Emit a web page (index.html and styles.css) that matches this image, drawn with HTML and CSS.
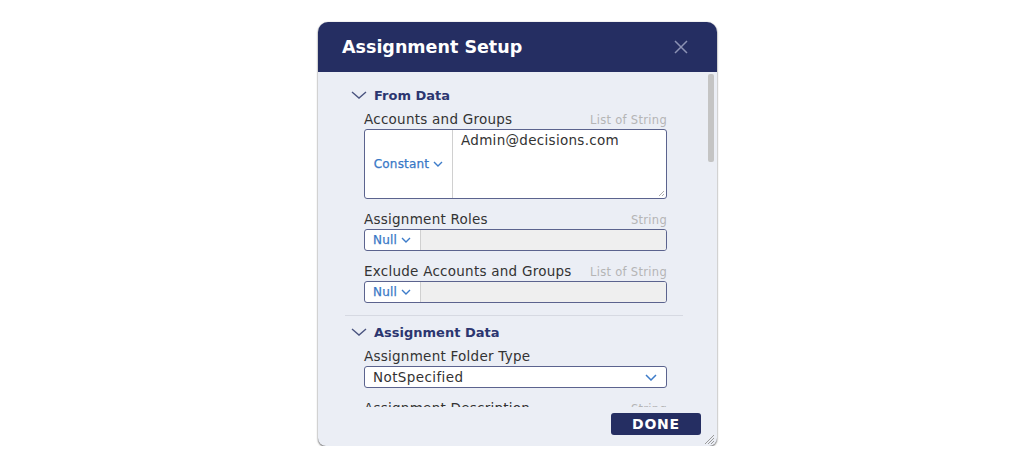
FILE: index.html
```
<!DOCTYPE html>
<html lang="en">
<head>
    <meta charset="UTF-8">
    <meta name="viewport" content="width=device-width, initial-scale=1.0">
    <title>Assignment Setup</title>
    <link rel="stylesheet" href="styles.css">
</head>
<body>

    <div class="page">
        <div class="dialog">
            <div class="dialog-header">
                <h1>Assignment Setup</h1>
                <svg class="close" width="14" height="14" viewBox="0 0 14 14">
                    <path d="M1 1 L13 13 M13 1 L1 13" stroke="#8c92b4" stroke-width="1.5" fill="none"/>
                </svg>
            </div>

            <div class="dialog-body">
                <div class="body-content">
                    <div class="section">
                        <div class="section-title">
                            <svg width="16" height="8" viewBox="0 0 16 8"><polyline points="1,1 8,7 15,1" fill="none" stroke="#4b5580" stroke-width="1.4"/></svg>
                            From Data
                        </div>

                        <div class="field">
                            <div class="field-label"><span>Accounts and Groups</span><span class="type">List of String</span></div>
                            <div class="input-box tall">
                                <div class="mode">Constant <svg width="10" height="6" viewBox="0 0 10 6"><polyline points="1,1 5,5 9,1" fill="none" stroke="#3d7cc9" stroke-width="1.4"/></svg></div>
                                <div class="value text">Admin@decisions.com
                                    <svg class="grip small" width="8" height="8" viewBox="0 0 8 8"><path d="M7 2 L2 7 M7 5 L5 7" stroke="#999" stroke-width="0.8"/></svg>
                                </div>
                            </div>
                        </div>

                        <div class="field">
                            <div class="field-label"><span>Assignment Roles</span><span class="type">String</span></div>
                            <div class="input-box">
                                <div class="mode short">Null <svg width="10" height="6" viewBox="0 0 10 6"><polyline points="1,1 5,5 9,1" fill="none" stroke="#3d7cc9" stroke-width="1.4"/></svg></div>
                                <div class="value empty"></div>
                            </div>
                        </div>

                        <div class="field">
                            <div class="field-label"><span>Exclude Accounts and Groups</span><span class="type">List of String</span></div>
                            <div class="input-box">
                                <div class="mode short">Null <svg width="10" height="6" viewBox="0 0 10 6"><polyline points="1,1 5,5 9,1" fill="none" stroke="#3d7cc9" stroke-width="1.4"/></svg></div>
                                <div class="value empty"></div>
                            </div>
                        </div>
                    </div>

                    <div class="section">
                        <div class="section-title">
                            <svg width="16" height="8" viewBox="0 0 16 8"><polyline points="1,1 8,7 15,1" fill="none" stroke="#4b5580" stroke-width="1.4"/></svg>
                            Assignment Data
                        </div>

                        <div class="field">
                            <div class="field-label"><span>Assignment Folder Type</span></div>
                            <div class="select-box">
                                <span>NotSpecified</span>
                                <svg width="12" height="7" viewBox="0 0 12 7"><polyline points="1,1 6,6 11,1" fill="none" stroke="#3d7cc9" stroke-width="1.5"/></svg>
                            </div>
                        </div>

                        <div class="field">
                            <div class="field-label"><span>Assignment Description</span><span class="type">String</span></div>
                            <div class="input-box">
                                <div class="mode short">Null <svg width="10" height="6" viewBox="0 0 10 6"><polyline points="1,1 5,5 9,1" fill="none" stroke="#3d7cc9" stroke-width="1.4"/></svg></div>
                                <div class="value empty"></div>
                            </div>
                        </div>
                    </div>
                </div>

                <div class="scrollbar"><div class="thumb"></div></div>
            </div>

            <div class="dialog-footer">
                <button class="done">DONE</button>
                <svg class="grip" width="12" height="12" viewBox="0 0 12 12"><path d="M11 2 L2 11 M11 5 L5 11 M11 8 L8 11" stroke="#9a9a9a" stroke-width="1"/></svg>
            </div>
        </div>
    </div>

</body>
</html>
```

FILE: styles.css
```
body {
    margin: 0;
    background: #ffffff;
    font-family: "DejaVu Sans", Verdana, sans-serif;
    color: #333;
}
.page {
    padding: 22px 0 0 318px;
}
.dialog {
    width: 399px;
    height: 424px;
    background: #ebeef5;
    border-radius: 10px 10px 8px 8px;
    box-shadow: 0 1px 2px rgba(0, 0, 0, 0.6), 0 0 1px rgba(0, 0, 0, 0.25);
    display: flex;
    flex-direction: column;
    overflow: hidden;
}
.dialog-header {
    height: 50px;
    flex: none;
    background: #252e62;
    display: flex;
    align-items: center;
    justify-content: space-between;
    padding: 0 29px 0 24px;
}
.dialog-header h1 {
    margin: 0;
    color: #fff;
    font-size: 17.5px;
    font-weight: bold;
}
.dialog-body {
    height: 335px;
    flex: none;
    display: flex;
    overflow: hidden;
}
.body-content {
    flex: 1;
    overflow: hidden;
    padding-top: 7px;
}
.scrollbar {
    width: 10px;
    flex: none;
    padding: 2px 0 0 1px;
    box-sizing: border-box;
}
.thumb {
    width: 6px;
    height: 88px;
    background: #c4c4c4;
    border-radius: 2px;
}
.section {
    margin: 0 24px 0 27px;
    padding: 6px 16px 12px 6px;
    border-bottom: 1px solid #d6d9e2;
}
.section-title {
    display: flex;
    align-items: center;
    gap: 7px;
    height: 20px;
    font-size: 13px;
    font-weight: bold;
    color: #2c3670;
}
.field {
    margin: 6px 0 0 13px;
}
.field + .field {
    margin-top: 12px;
}
.field-label {
    display: flex;
    justify-content: space-between;
    align-items: baseline;
    height: 16px;
    font-size: 13.5px;
    letter-spacing: 0.25px;
    color: #333;
    margin-bottom: 2px;
}
.type {
    font-size: 11.5px;
    letter-spacing: 0.3px;
    color: #b5b5b5;
}
.input-box {
    display: flex;
    height: 22px;
    border: 1px solid #5b638e;
    border-radius: 3px;
    background: #fff;
    box-sizing: border-box;
    overflow: hidden;
}
.input-box.tall {
    height: 70px;
}
.mode {
    width: 88px;
    flex: none;
    display: flex;
    align-items: center;
    justify-content: center;
    gap: 4px;
    font-size: 12px;
    letter-spacing: 0.2px;
    color: #3878c6;
    -webkit-text-stroke: 0.25px #3878c6;
    border-right: 1px solid #d0d0d0;
    box-sizing: border-box;
}
.mode.short {
    width: 56px;
    justify-content: flex-start;
    padding-left: 8px;
}
.value {
    flex: 1;
    position: relative;
}
.value.text {
    padding: 2px 8px;
    font-size: 13.5px;
    letter-spacing: 0.3px;
}
.value.empty {
    background: #efefef;
}
.grip.small {
    position: absolute;
    right: 1px;
    bottom: 1px;
}
.select-box {
    display: flex;
    justify-content: space-between;
    align-items: center;
    height: 22px;
    box-sizing: border-box;
    padding: 0 9px 0 8px;
    border: 1px solid #5b638e;
    border-radius: 3px;
    background: #fff;
    font-size: 13.5px;
    letter-spacing: 0.4px;
}
.dialog-footer {
    flex: 1;
    position: relative;
    display: flex;
    justify-content: flex-end;
    align-items: flex-start;
    padding: 6px 16px 0 0;
}
.done {
    width: 90px;
    height: 22px;
    border: none;
    border-radius: 3px;
    background: #252e62;
    color: #fff;
    font-family: "DejaVu Sans", sans-serif;
    font-weight: bold;
    font-size: 14px;
    letter-spacing: 0.8px;
    cursor: pointer;
}
.grip {
    position: absolute;
    right: 2px;
    bottom: 1px;
}
```
